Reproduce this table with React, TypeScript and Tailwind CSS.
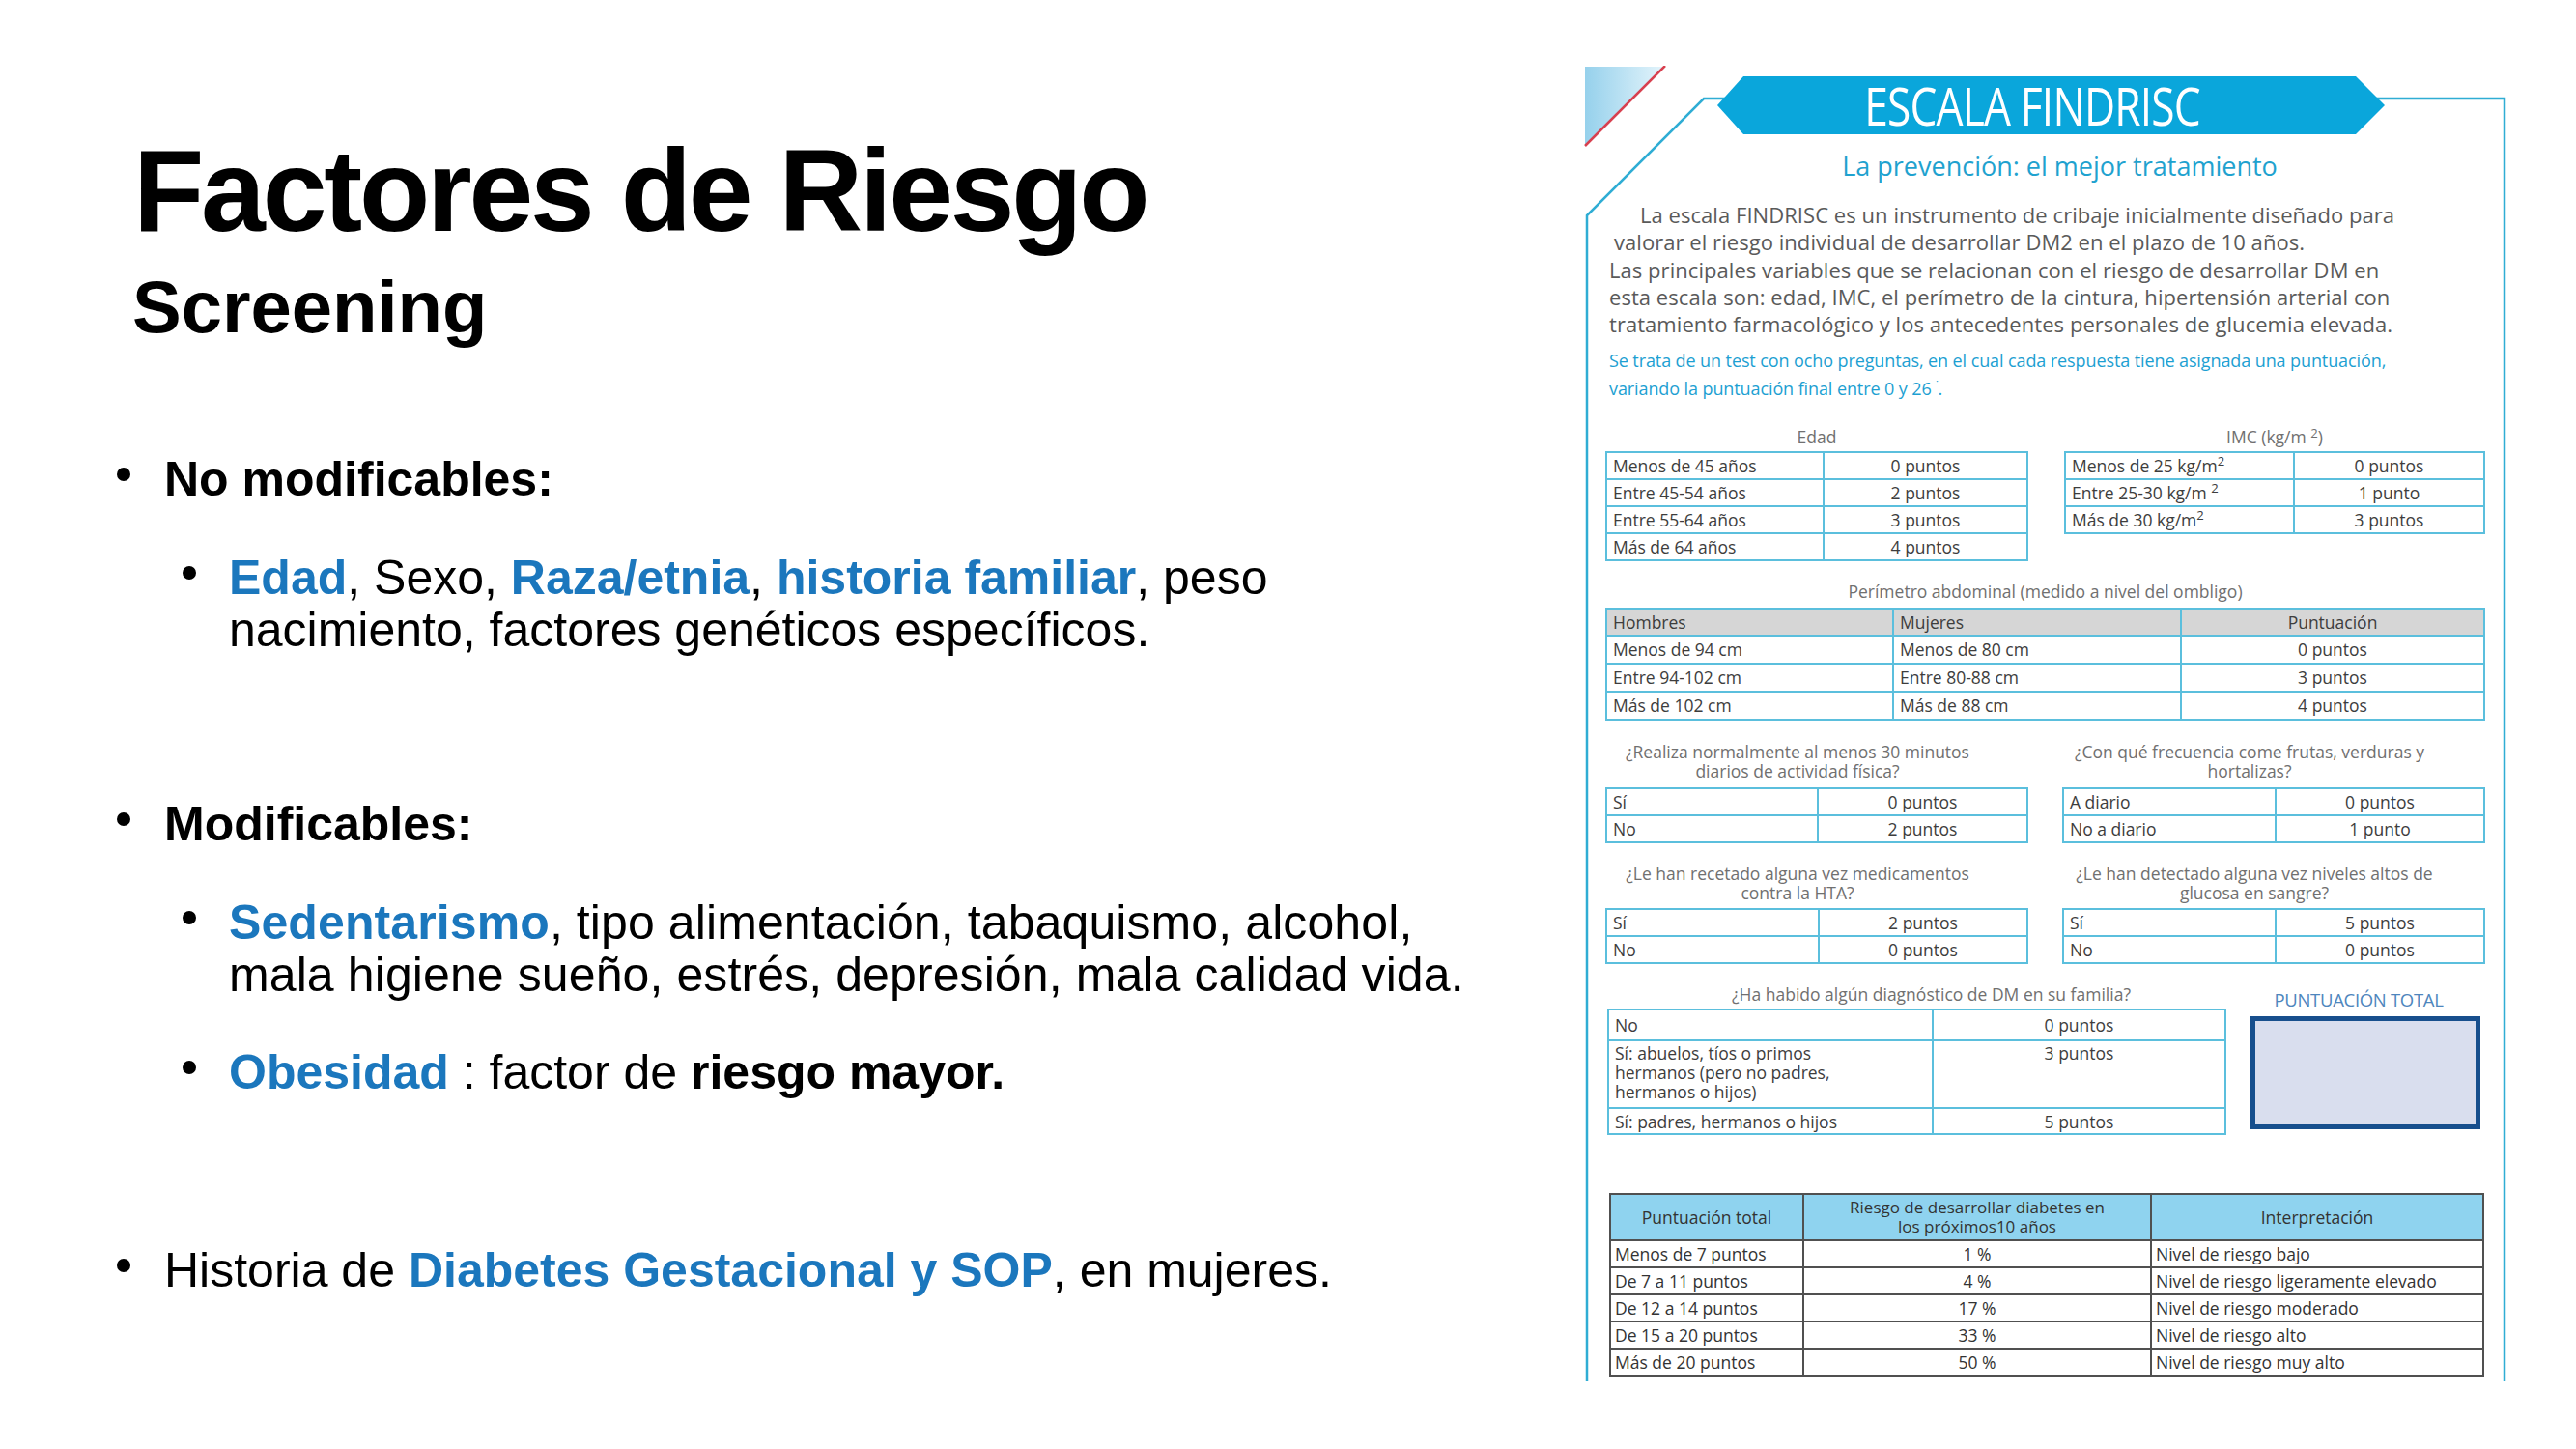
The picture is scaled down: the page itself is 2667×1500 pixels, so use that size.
import React from 'react'

type Row = [React.ReactNode, React.ReactNode]

const td = 'border-2 border-[#5bbfdd] px-[6px] py-0 align-middle'

const PointsTable = ({ rows, colClass }: { rows: Row[]; colClass: string }) => {
  return (
    <table className="w-full table-fixed border-collapse text-[17.5px] leading-none text-[#3d3d3d]">
      <colgroup>
        <col className={colClass} />
        <col />
      </colgroup>
      <tbody>
        {rows.map((r, i) => (
          <tr key={i} className="h-[28px]">
            <td className={td}>{r[0]}</td>
            <td className={`${td} text-center`}>{r[1]}</td>
          </tr>
        ))}
      </tbody>
    </table>
  )
}

const Label = ({ children, className = '' }: { children: React.ReactNode; className?: string }) => (
  <div className={`text-center text-[17.5px] leading-[20px] text-[#707070] ${className}`}>{children}</div>
)

const Dot = ({ className = '' }: { className?: string }) => (
  <span className={`mt-[15px] h-[14px] w-[14px] shrink-0 rounded-full bg-black ${className}`} />
)

const blue = 'font-bold text-[#1b77bd]'

const Findrisc = () => {
  return (
    <div className="relative mt-[68px] h-[1362px] w-[965px] shrink-0 overflow-hidden font-['Open_Sans',sans-serif]">
      <svg className="absolute inset-0 h-full w-full" viewBox="0 0 965 1362" fill="none">
        <defs>
          <linearGradient id="corner" x1="0" y1="0" x2="1" y2="0">
            <stop offset="0" stopColor="#96d1ec" />
            <stop offset="1" stopColor="#e4f4fb" />
          </linearGradient>
        </defs>
        <polygon points="1,1 83,1 1,82" fill="url(#corner)" />
        <line x1="84" y1="0" x2="1" y2="83" stroke="#d8404f" strokeWidth="2.5" />
        <polyline points="3,1362 3,155 124,34 150,34" stroke="#2fadd4" strokeWidth="2.5" />
        <polyline points="820,34 953,34 953,1362" stroke="#2fadd4" strokeWidth="2.5" />
      </svg>

      <div className="relative flex flex-col">
        <div className="ml-[138px] mt-[11px] flex h-[60px] w-[691px] items-center justify-center bg-[#0aa6db] pr-[40px] [clip-path:polygon(0_50%,27px_0,calc(100%-30px)_0,100%_50%,calc(100%-30px)_100%,27px_100%)]">
          <span className="scale-x-[0.82] whitespace-nowrap text-[54px] leading-none tracking-[-1px] text-white">
            ESCALA FINDRISC
          </span>
        </div>

        <div className="mt-[15px] pl-[20px] text-center text-[27px] leading-[36px] text-[#1fa2cf]">
          La prevención: el mejor tratamiento
        </div>

        <div className="mt-[18px] pl-[26px] text-[22px] leading-[28.3px] tracking-[0.05px] text-[#5a5a5a]">
          <div className="pl-[32px]">La escala FINDRISC es un instrumento de cribaje inicialmente diseñado para</div>
          <div className="pl-[5px]">valorar el riesgo individual de desarrollar DM2 en el plazo de 10 años.</div>
          <div>Las principales variables que se relacionan con el riesgo de desarrollar DM en</div>
          <div>esta escala son: edad, IMC, el perímetro de la cintura, hipertensión arterial con</div>
          <div>tratamiento farmacológico y los antecedentes personales de glucemia elevada.</div>
        </div>

        <div className="mt-[10px] pl-[26px] text-[18px] leading-[29px] tracking-[-0.1px] text-[#1d9fd2]">
          <div>Se trata de un test con ocho preguntas, en el cual cada respuesta tiene asignada una puntuación,</div>
          <div>variando la puntuación final entre 0 y 26 <sup>˙</sup>.</div>
        </div>

        <div className="pl-[22px] pr-[32px]">
          <div className="mt-[23px] grid grid-cols-[438px_436px] gap-x-[37px]">
            <div>
              <Label className="leading-[24px]">Edad</Label>
              <div className="mt-[3px]">
                <PointsTable
                  colClass="w-[225px]"
                  rows={[
                    ['Menos de 45 años', '0 puntos'],
                    ['Entre 45-54 años', '2 puntos'],
                    ['Entre 55-64 años', '3 puntos'],
                    ['Más de 64 años', '4 puntos'],
                  ]}
                />
              </div>
            </div>
            <div>
              <Label className="leading-[24px]">
                IMC (kg/m <sup>2</sup>)
              </Label>
              <div className="mt-[3px]">
                <PointsTable
                  colClass="w-[237px]"
                  rows={[
                    [<>Menos de 25 kg/m<sup>2</sup></>, '0 puntos'],
                    [<>Entre 25-30 kg/m <sup>2</sup></>, '1 punto'],
                    [<>Más de 30 kg/m<sup>2</sup></>, '3 puntos'],
                  ]}
                />
              </div>
            </div>
          </div>

          <Label className="mt-[19px] leading-[24px]">Perímetro abdominal (medido a nivel del ombligo)</Label>
          <table className="mt-[5px] w-full table-fixed border-collapse text-[17.5px] leading-none text-[#3d3d3d]">
            <colgroup>
              <col className="w-[297px]" />
              <col className="w-[298px]" />
              <col />
            </colgroup>
            <tbody>
              <tr className="h-[28px] bg-[#d6d6d6]">
                <td className={td}>Hombres</td>
                <td className={td}>Mujeres</td>
                <td className={`${td} text-center`}>Puntuación</td>
              </tr>
              {[
                ['Menos de 94 cm', 'Menos de 80 cm', '0 puntos'],
                ['Entre 94-102 cm', 'Entre 80-88 cm', '3 puntos'],
                ['Más de 102 cm', 'Más de 88 cm', '4 puntos'],
              ].map((r) => (
                <tr key={r[0]} className="h-[29px]">
                  <td className={td}>{r[0]}</td>
                  <td className={td}>{r[1]}</td>
                  <td className={`${td} text-center`}>{r[2]}</td>
                </tr>
              ))}
            </tbody>
          </table>

          <div className="mt-[22px] grid grid-cols-[438px_438px] gap-x-[35px]">
            <div>
              <Label className="pr-[40px]">
                ¿Realiza normalmente al menos 30 minutos
                <br />
                diarios de actividad física?
              </Label>
              <div className="mt-[7px]">
                <PointsTable
                  colClass="w-[219px]"
                  rows={[
                    ['Sí', '0 puntos'],
                    ['No', '2 puntos'],
                  ]}
                />
              </div>
            </div>
            <div>
              <Label className="pr-[50px]">
                ¿Con qué frecuencia come frutas, verduras y
                <br />
                hortalizas?
              </Label>
              <div className="mt-[7px]">
                <PointsTable
                  colClass="w-[220px]"
                  rows={[
                    ['A diario', '0 puntos'],
                    ['No a diario', '1 punto'],
                  ]}
                />
              </div>
            </div>
            <div className="mt-[21px]">
              <Label className="pr-[40px]">
                ¿Le han recetado alguna vez medicamentos
                <br />
                contra la HTA?
              </Label>
              <div className="mt-[6px]">
                <PointsTable
                  colClass="w-[220px]"
                  rows={[
                    ['Sí', '2 puntos'],
                    ['No', '0 puntos'],
                  ]}
                />
              </div>
            </div>
            <div className="mt-[21px]">
              <Label className="pr-[40px]">
                ¿Le han detectado alguna vez niveles altos de
                <br />
                glucosa en sangre?
              </Label>
              <div className="mt-[6px]">
                <PointsTable
                  colClass="w-[220px]"
                  rows={[
                    ['Sí', '5 puntos'],
                    ['No', '0 puntos'],
                  ]}
                />
              </div>
            </div>
          </div>

          <div className="mt-[21px] flex items-start">
            <div className="w-[643px] shrink-0 pl-[2px]">
              <Label className="pl-[30px]">¿Ha habido algún diagnóstico de DM en su familia?</Label>
              <table className="mt-[5px] w-full table-fixed border-collapse text-[17.5px] leading-[20px] text-[#3d3d3d]">
                <colgroup>
                  <col className="w-[336px]" />
                  <col />
                </colgroup>
                <tbody>
                  <tr className="h-[32px]">
                    <td className={td}>No</td>
                    <td className={`${td} text-center`}>0 puntos</td>
                  </tr>
                  <tr className="h-[70px]">
                    <td className={`${td} align-top pt-[2px]`}>
                      Sí: abuelos, tíos o primos
                      <br />
                      hermanos (pero no padres,
                      <br />
                      hermanos o hijos)
                    </td>
                    <td className={`${td} align-top pt-[2px] text-center`}>3 puntos</td>
                  </tr>
                  <tr className="h-[27px]">
                    <td className={td}>Sí: padres, hermanos o hijos</td>
                    <td className={`${td} text-center`}>5 puntos</td>
                  </tr>
                </tbody>
              </table>
            </div>
            <div className="ml-[25px] mt-[6px] flex w-[238px] flex-col items-center">
              <div className="pr-[14px] text-[18.5px] leading-[20px] tracking-[-0.3px] text-[#4e86bd]">PUNTUACIÓN TOTAL</div>
              <div className="mt-[7px] h-[117px] w-[238px] border-[5px] border-[#174f8d] bg-[#d9deee]" />
            </div>
          </div>

          <table className="ml-[4px] mt-[60px] w-[906px] table-fixed border-collapse text-[17.5px] leading-none text-[#333]">
            <colgroup>
              <col className="w-[200px]" />
              <col className="w-[360px]" />
              <col />
            </colgroup>
            <tbody>
              <tr className="h-[48px] bg-[#8fd3ef]">
                <td className="border-2 border-[#505050] text-center">Puntuación total</td>
                <td className="border-2 border-[#505050] text-center text-[17px] leading-[20px]">
                  Riesgo de desarrollar diabetes en
                  <br />
                  los próximos10 años
                </td>
                <td className="border-2 border-[#505050] text-center">Interpretación</td>
              </tr>
              {[
                ['Menos de 7 puntos', '1 %', 'Nivel de riesgo bajo'],
                ['De 7 a 11 puntos', '4 %', 'Nivel de riesgo ligeramente elevado'],
                ['De 12 a 14 puntos', '17 %', 'Nivel de riesgo moderado'],
                ['De 15 a 20 puntos', '33 %', 'Nivel de riesgo alto'],
                ['Más de 20 puntos', '50 %', 'Nivel de riesgo muy alto'],
              ].map((r) => (
                <tr key={r[0]} className="h-[28px]">
                  <td className="border-2 border-[#505050] px-[4px]">{r[0]}</td>
                  <td className="border-2 border-[#505050] text-center">{r[1]}</td>
                  <td className="border-2 border-[#505050] px-[4px]">{r[2]}</td>
                </tr>
              ))}
            </tbody>
          </table>
        </div>
      </div>
    </div>
  )
}

const App: React.FC = () => {
  return (
    <div className="flex h-[1500px] w-[2667px] overflow-hidden bg-white font-['Liberation_Sans',Arial,sans-serif] text-black">
      <div className="flex w-[1640px] shrink-0 flex-col">
        <h1 className="ml-[138px] mt-[137px] text-[120px] font-bold leading-none tracking-[-3.2px]">Factores de Riesgo</h1>
        <h2 className="ml-[137px] mt-[23px] text-[76px] font-bold leading-none">Screening</h2>

        <ul className="ml-[121px] mt-[113px] flex flex-col text-[50px] leading-[54px]">
          <li className="flex gap-[35px]">
            <Dot />
            <span className="font-bold">No modificables:</span>
          </li>
          <li className="ml-[68px] mt-[48px] flex gap-[34px]">
            <Dot />
            <span>
              <span className={blue}>Edad</span>, Sexo, <span className={blue}>Raza/etnia</span>,{' '}
              <span className={blue}>historia familiar</span>, peso
              <br />
              nacimiento, factores genéticos específicos.
            </span>
          </li>
          <li className="mt-[147px] flex gap-[35px]">
            <Dot />
            <span className="font-bold">Modificables:</span>
          </li>
          <li className="ml-[68px] mt-[48px] flex gap-[34px]">
            <Dot />
            <span className="tracking-[0.1px]">
              <span className={blue}>Sedentarismo</span>, tipo alimentación, tabaquismo, alcohol,
              <br />
              mala higiene sueño, estrés, depresión, mala calidad vida.
            </span>
          </li>
          <li className="ml-[68px] mt-[47px] flex gap-[34px]">
            <Dot />
            <span>
              <span className={blue}>Obesidad</span> : factor de <span className="font-bold">riesgo mayor.</span>
            </span>
          </li>
          <li className="mt-[151px] flex gap-[35px]">
            <Dot />
            <span>
              Historia de <span className={blue}>Diabetes Gestacional y SOP</span>, en mujeres.
            </span>
          </li>
        </ul>
      </div>
      <Findrisc />
    </div>
  )
}

export default App
